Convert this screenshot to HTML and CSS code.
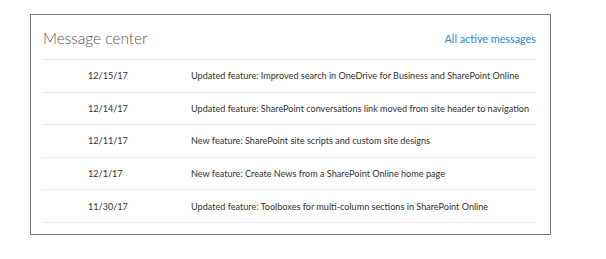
FILE: index.html
```html
<!DOCTYPE html>
<html lang="en">
<head>
  <meta charset="UTF-8" />
  <title>Message center</title>
  <link rel="stylesheet" href="styles.css">
</head>
<body>
  <div class="card">
    <div class="card-header">
      <h2>Message center</h2>
      <a href="#" class="all-link">All active messages</a>
    </div>
    <ul class="messages">
      <li class="message"><span class="date">12/15/17</span><span class="title">Updated feature: Improved search in OneDrive for Business and SharePoint Online</span></li>
      <li class="message"><span class="date">12/14/17</span><span class="title">Updated feature: SharePoint conversations link moved from site header to navigation</span></li>
      <li class="message"><span class="date">12/11/17</span><span class="title">New feature: SharePoint site scripts and custom site designs</span></li>
      <li class="message"><span class="date">12/1/17</span><span class="title">New feature: Create News from a SharePoint Online home page</span></li>
      <li class="message"><span class="date">11/30/17</span><span class="title">Updated feature: Toolboxes for multi-column sections in SharePoint Online</span></li>
    </ul>
  </div>
</body>
</html>
```

FILE: styles.css
```css
* { box-sizing:border-box; margin:0; padding:0; }
body {
  background:#fff;
  font-family:'Lato','Noto Sans',sans-serif;
  padding:14px 0 0 30px;
}
.card {
  width:521px; height:221px;
  border:1px solid #7a7a7a;
  padding:0 14px 0 12px;
}
.card-header {
  display:flex; justify-content:space-between;
  align-items:center;
  height:45px;
  border-bottom:1px solid #ececec;
}
.card-header h2 {
  font-size:15.4px; font-weight:300;
  color:#555; padding-top:1px;
}
.all-link {
  font-size:10.8px; color:#2b88d8;
  text-decoration:none; padding-top:2px;
}
.messages { list-style:none; }
.message {
  display:flex; align-items:center;
  height:32.6px;
  border-bottom:1px solid #ececec;
  padding-left:45px;
  font-size:9.1px; color:#333;
  white-space:nowrap;
}
.date { width:103px; flex-shrink:0; }
```
